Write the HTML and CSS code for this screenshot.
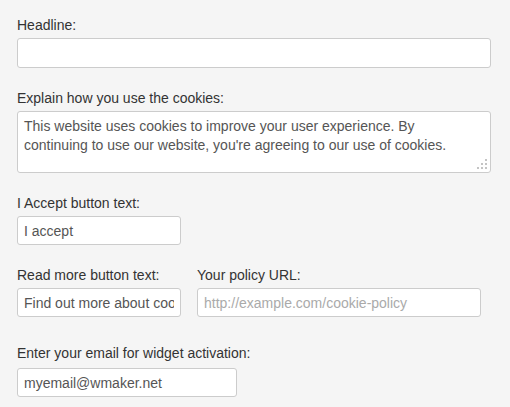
FILE: index.html
```html
<!DOCTYPE html>
<html>
  <head>
    <title>Cookie widget settings</title>
    <link rel="stylesheet" href="styles.css">
  </head>
  <body>
    <div class="settings">
      <div class="field">
        <label for="headline">Headline:</label>
        <input type="text" id="headline" class="wide tall" />
      </div>

      <div class="field">
        <label for="message">Explain how you use the cookies:</label>
        <div class="area-wrap">
          <textarea id="message">This website uses cookies to improve your user experience. By continuing to use our website, you're agreeing to our use of cookies.</textarea>
          <svg class="grip" width="12" height="12" viewBox="0 0 12 12">
            <rect x="9" y="1" width="2" height="2" />
            <rect x="5" y="5" width="2" height="2" />
            <rect x="9" y="5" width="2" height="2" />
            <rect x="1" y="9" width="2" height="2" />
            <rect x="5" y="9" width="2" height="2" />
            <rect x="9" y="9" width="2" height="2" />
          </svg>
        </div>
      </div>

      <div class="field">
        <label for="accept-text">I Accept button text:</label>
        <input type="text" id="accept-text" class="short" value="I accept" />
      </div>

      <div class="field row">
        <div class="col">
          <label for="more-text">Read more button text:</label>
          <input type="text" id="more-text" class="short" value="Find out more about cookies" />
        </div>
        <div class="col">
          <label for="policy-url">Your policy URL:</label>
          <input type="text" id="policy-url" class="url" placeholder="http://example.com/cookie-policy" />
        </div>
      </div>

      <div class="field email">
        <label for="email">Enter your email for widget activation:</label>
        <input type="text" id="email" class="mid" value="myemail@wmaker.net" />
      </div>
    </div>
  </body>
</html>
```
FILE: styles.css
```css
body {
  margin: 0;
  background-color: #f5f5f5;
  font-family: "Liberation Sans", Arial, sans-serif;
  color: #333;
}

.settings {
  padding: 17px 19px 0 17px;
}

.field {
  margin-bottom: 22px;
}

.field label {
  display: block;
  font-size: 14px;
  line-height: 17px;
  margin-bottom: 4px;
}

.field input,
.field textarea {
  box-sizing: border-box;
  display: block;
  height: 29px;
  padding: 0 6px;
  font-family: "Liberation Sans", Arial, sans-serif;
  font-size: 14px;
  color: #555;
  background-color: #fff;
  border: 1px solid #ccc;
  border-radius: 3px;
  outline: none;
}

.field input::placeholder {
  color: #aaa;
}

.wide {
  width: 474px;
}

.tall {
  height: 30px !important;
}

.short {
  width: 164px;
}

.url {
  width: 284px;
}

.mid {
  width: 220px;
}

.area-wrap {
  position: relative;
  width: 474px;
}

.field textarea {
  width: 474px;
  height: 62px;
  padding: 5px 20px 5px 6px;
  line-height: 19px;
  resize: none;
  overflow: hidden;
}

.grip {
  position: absolute;
  right: 3px;
  bottom: 3px;
  fill: #c4c4c4;
}

.row {
  display: flex;
  gap: 16px;
  margin-bottom: 28px;
}

.email label {
  margin-bottom: 6px;
}
```
